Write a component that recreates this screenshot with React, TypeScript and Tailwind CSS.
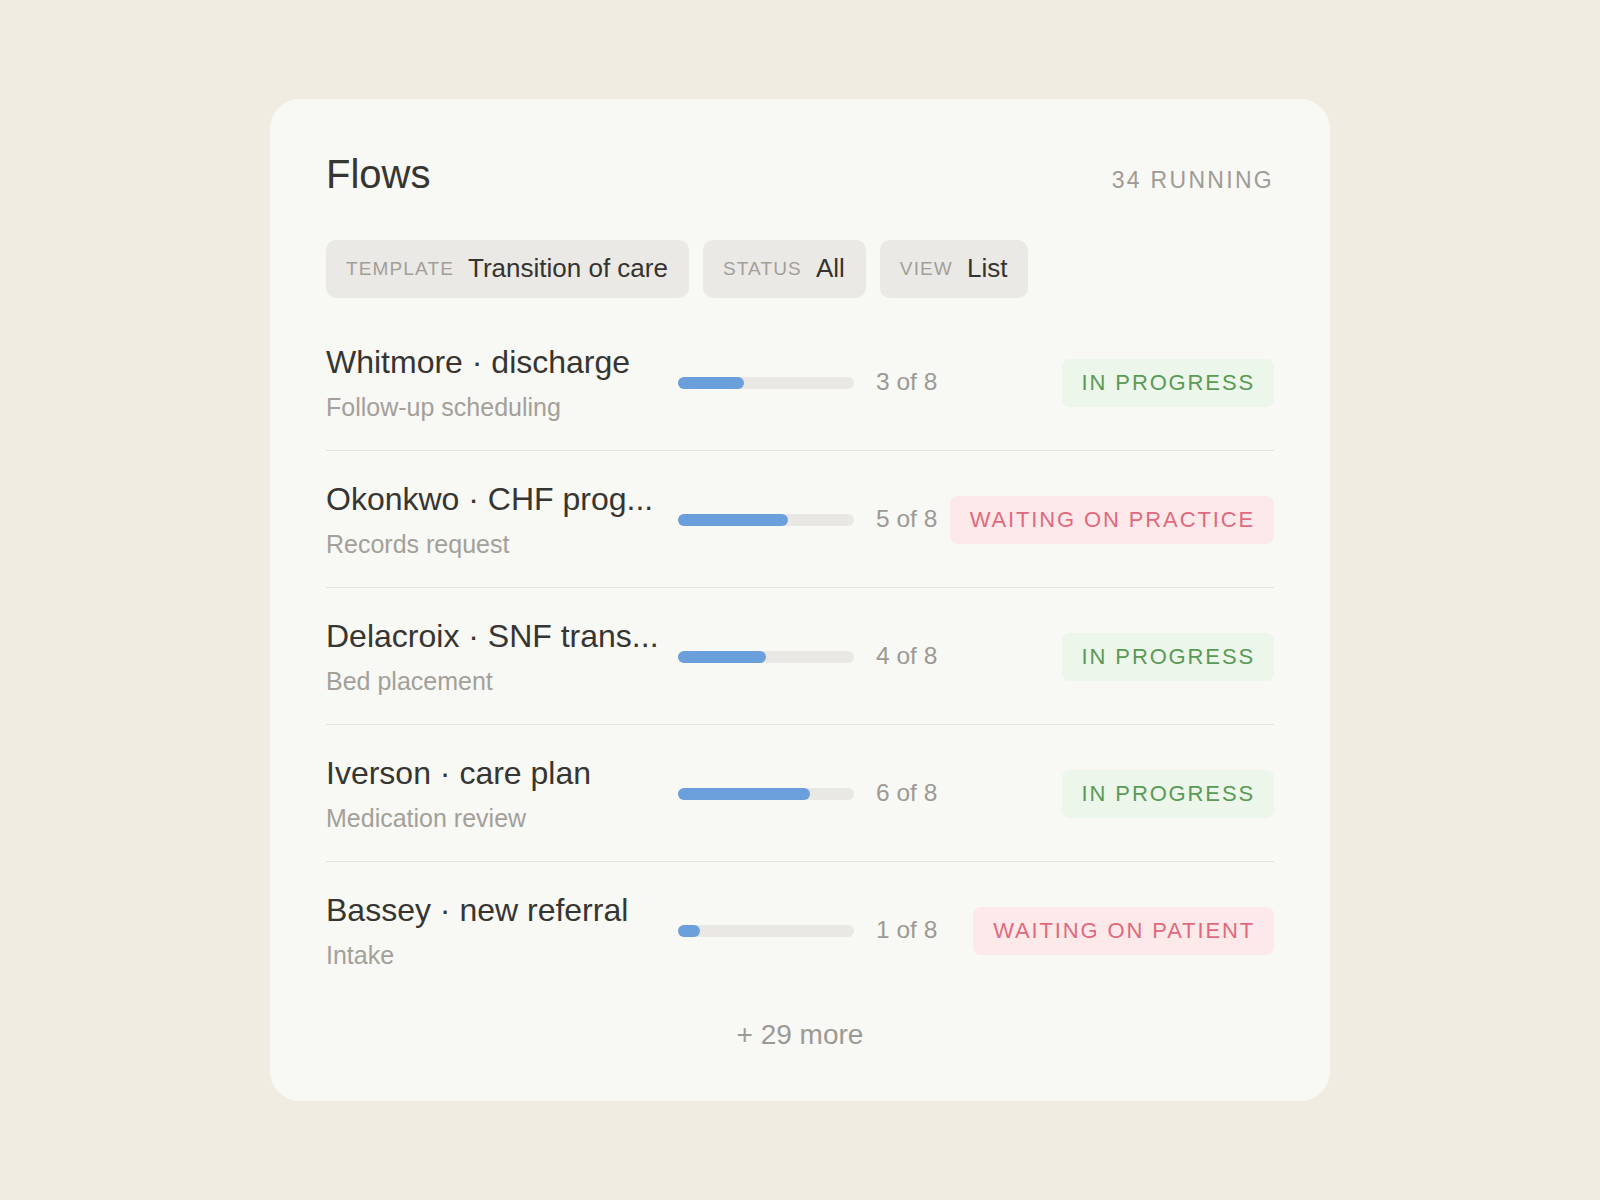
import React from "react";

type Status = "progress" | "practice" | "patient";

interface Flow {
  id: number;
  title: string;
  step: string;
  done: number;
  total: number;
  status: Status;
}

const flows: Flow[] = [
  { id: 1, title: "Whitmore · discharge", step: "Follow-up scheduling", done: 3, total: 8, status: "progress" },
  { id: 2, title: "Okonkwo · CHF prog...", step: "Records request", done: 5, total: 8, status: "practice" },
  { id: 3, title: "Delacroix · SNF trans...", step: "Bed placement", done: 4, total: 8, status: "progress" },
  { id: 4, title: "Iverson · care plan", step: "Medication review", done: 6, total: 8, status: "progress" },
  { id: 5, title: "Bassey · new referral", step: "Intake", done: 1, total: 8, status: "patient" },
];

const statusLabel: Record<Status, string> = {
  progress: "IN PROGRESS",
  practice: "WAITING ON PRACTICE",
  patient: "WAITING ON PATIENT",
};

const FilterPill: React.FC<{ label: string; value: string }> = ({ label, value }) => (
  <div className="flex h-[58px] items-center gap-[14px] rounded-[10px] bg-[#ebe9e5] pl-5 pr-[21px]">
    <span className="text-[19px] tracking-[0.06em] text-[#a29f99]">{label}</span>
    <span className="text-[26px] text-[#34332f]">{value}</span>
  </div>
);

const StatusBadge: React.FC<{ status: Status }> = ({ status }) => (
  <span
    className={`ml-auto flex h-[48px] items-center rounded-[8px] pl-[20px] pr-[19px] text-[22px] tracking-[0.085em] ${
      status === "progress" ? "bg-[#ecf6ea] text-[#5b9a56]" : "bg-[#fde9ea] text-[#e0697d]"
    }`}
  >
    {statusLabel[status]}
  </span>
);

export default function App() {
  return (
    <div className="flex min-h-screen items-center justify-center bg-[#f1ece1] font-['Liberation_Sans',Arial,sans-serif]">
      <div className="w-[1060px] rounded-[30px] bg-[#f8f8f4] px-[56px] pb-[48px] pt-[53px]">
        <div className="flex items-baseline justify-between">
          <h1 className="text-[40px] leading-[44px] text-[#363531]">Flows</h1>
          <span className="text-[23px] tracking-[0.1em] text-[#9e9b95]">34 RUNNING</span>
        </div>

        <div className="mt-[42px] flex gap-[14px]">
          <FilterPill label="TEMPLATE" value="Transition of care" />
          <FilterPill label="STATUS" value="All" />
          <FilterPill label="VIEW" value="List" />
        </div>

        <ul className="mt-[16px]">
          {flows.map(flow => (
            <li
              key={flow.id}
              className="flex items-center border-b border-[#e5e3de] pb-[27px] pt-[29px] last:border-0"
            >
              <div className="w-[330px] shrink-0 whitespace-nowrap">
                <div className="text-[32px] leading-[38px] text-[#363531]">{flow.title}</div>
                <div className="mt-[10px] text-[25px] leading-[32px] text-[#a3a09a]">{flow.step}</div>
              </div>
              <div className="ml-[22px] h-[12px] w-[176px] shrink-0 rounded-full bg-[#eae8e4]">
                <div
                  className="h-full rounded-full bg-[#6a9fdc]"
                  style={{ width: `${(flow.done / flow.total) * 100}%` }}
                />
              </div>
              <span className="ml-[22px] whitespace-nowrap text-[24.5px] text-[#9c9a95]">
                {flow.done} of {flow.total}
              </span>
              <StatusBadge status={flow.status} />
            </li>
          ))}
        </ul>

        <div className="mt-[19px] text-center text-[28px] leading-[36px] text-[#9c9a95]">+ 29 more</div>
      </div>
    </div>
  );
}
